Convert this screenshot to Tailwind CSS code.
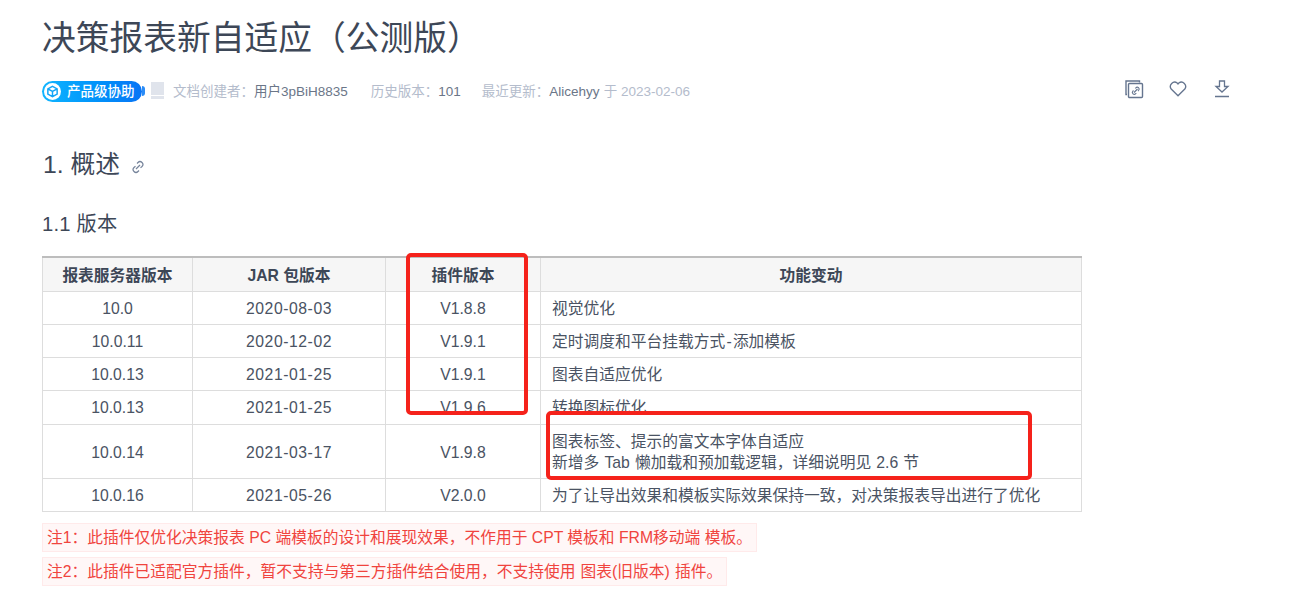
<!DOCTYPE html>
<html lang="zh"><head><meta charset="utf-8">
<script src="https://cdn.jsdelivr.net/npm/@tailwindcss/browser@4"></script>
</head>
<body class="bg-white overflow-hidden">
<div class="relative w-[1294px] h-[610px] overflow-hidden pl-[42px] font-['Liberation_Sans','Noto_Sans_CJK_SC',sans-serif] text-[#3d4757]">
  <h1 class="h-[72px] pt-[16px] text-[33.75px] leading-[44px] text-[#3d4757]">决策报表新自适应（公测版）</h1>
  <div class="flex items-center h-[38px] w-[1188px] text-[13.5px] text-[#b4bccc]">
    <span class="flex items-center w-[100px] h-[21px] rounded-full bg-gradient-to-r from-[#12b5ff] to-[#0a74f5] text-white text-[13.5px] font-medium">
      <span class="ml-[2px] flex items-center justify-center w-[17px] h-[17px] rounded-full bg-white">
        <svg width="13" height="13" viewBox="0 0 14 14" fill="none" stroke="#12a5f8" stroke-width="1.6"><path d="M7 1.5 12 4.2V9.8L7 12.5 2 9.8V4.2ZM2 4.2 7 7 12 4.2M7 7V12.5"/></svg>
      </span>
      <span class="ml-[6px] pt-[2px]">产品级协助</span>
    </span>
    <span class="w-[3px] h-[10px] rounded-r-full bg-[#2a8cf7]"></span>
    <svg class="ml-[6px]" width="13" height="18" viewBox="0 0 13 18"><rect x="0" y="0" width="13" height="13" fill="#e0e4ec"/><path d="M0 14H13V17H0Z" fill="#e0e4ec"/></svg>
    <span class="ml-[9px] pt-[2px]">文档创建者：</span><span class="text-[#6b7688] pt-[2px]">用户3pBiH8835</span>
    <span class="ml-[23px] pt-[2px]">历史版本：</span><span class="text-[#6b7688] pt-[2px]">101</span>
    <span class="ml-[21px] pt-[2px]">最近更新：</span><span class="text-[#6b7688] pt-[2px]">Alicehyy</span><span class="ml-[4px] pt-[2px]">于 2023-02-06</span>
    <span class="ml-auto mb-[5px] flex items-center gap-[25px] text-[#65758f]">
      <svg width="20" height="20" viewBox="0 0 20 20" fill="none" stroke="currentColor" stroke-width="1.4"><path d="M3 15.500H2V2H15.500V3.500"/><rect x="4.500" y="4.500" width="14" height="14" rx="1"/><path d="M10 13.500l3.500-3.500M9.500 11.500l-.6.6a1.600 1.600 0 0 0 2.800 2.600l.6-.6M14 12l.6-.6a1.600 1.600 0 0 0-2.800-2.600l-.6.6" stroke-width="1.100"/></svg>
      <svg width="18" height="16" viewBox="0 0 18 16" fill="none" stroke="currentColor" stroke-width="1.300"><path d="M9 14.800 2.200 8A4.300 4.300 0 0 1 8.200 2l.8.900.8-.900a4.300 4.300 0 0 1 6 6Z"/></svg>
      <svg class="ml-[2px]" width="16" height="18" viewBox="0 0 16 18" fill="none" stroke="currentColor" stroke-width="1.300"><path d="M5.500 1h5v5.500h3.500L8 12 2 6.500h3.500ZM1 16.500h14"/></svg>
    </span>
  </div>
  <h2 class="mt-[33px] flex items-center h-[42px] text-[24.75px] leading-[42px] pl-[1px]"><span class="pt-[2px]">1. 概述</span>
    <svg class="ml-[11px] mt-[6px]" width="14" height="14" viewBox="0 0 14 14" fill="none" stroke="#76849b" stroke-width="1.200"><path d="M5 9l4-4M6 3.500l1-1a2.700 2.700 0 0 1 4 4l-1.500 1.200M8 10.500l-1 1a2.700 2.700 0 0 1-4-4l1.500-1.200"/></svg>
  </h2>
  <h3 class="mt-[24px] h-[30px] text-[20.25px] leading-[30px] tracking-[.2px]">1.1 版本</h3>
  <table class="mt-[17px] w-[1040px] table-fixed border-collapse text-[15.75px] text-[#4a5363] text-center border-t-2 border-t-[#bdbdbd]">
    <colgroup><col class="w-[150px]"><col class="w-[193px]"><col class="w-[155px]"><col></colgroup>
    <tbody>
      <tr class="h-[34px] bg-[#f6f6f6] font-bold text-[#3d4757]"><td class="border border-[#ddd] pt-[3px]">报表服务器版本</td><td class="border border-[#ddd] pt-[3px]">JAR 包版本</td><td class="border border-[#ddd] pt-[3px]">插件版本</td><td class="border border-[#ddd] pt-[3px]">功能变动</td></tr>
      <tr class="h-[33px]"><td class="border border-[#ddd] pt-[2px]">10.0</td><td class="border border-[#ddd] pt-[2px] tracking-[.55px]">2020-08-03</td><td class="border border-[#ddd] pt-[2px]">V1.8.8</td><td class="border border-[#ddd] pt-[2px] text-left pl-[11px]">视觉优化</td></tr>
      <tr class="h-[33px]"><td class="border border-[#ddd] pt-[2px]">10.0.11</td><td class="border border-[#ddd] pt-[2px] tracking-[.55px]">2020-12-02</td><td class="border border-[#ddd] pt-[2px]">V1.9.1</td><td class="border border-[#ddd] pt-[2px] text-left pl-[11px]">定时调度和平台挂载方式<span class="px-[1.2px]">-</span>添加模板</td></tr>
      <tr class="h-[33px]"><td class="border border-[#ddd] pt-[2px]">10.0.13</td><td class="border border-[#ddd] pt-[2px] tracking-[.55px]">2021-01-25</td><td class="border border-[#ddd] pt-[2px]">V1.9.1</td><td class="border border-[#ddd] pt-[2px] text-left pl-[11px]">图表自适应优化</td></tr>
      <tr class="h-[34px]"><td class="border border-[#ddd] pt-[2px]">10.0.13</td><td class="border border-[#ddd] pt-[2px] tracking-[.55px]">2021-01-25</td><td class="border border-[#ddd] pt-[2px]">V1.9.6</td><td class="border border-[#ddd] pt-[2px] text-left pl-[11px]">转换图标优化</td></tr>
      <tr class="h-[54px] leading-[21px]"><td class="border border-[#ddd] pt-[2px]">10.0.14</td><td class="border border-[#ddd] pt-[2px] tracking-[.55px]">2021-03-17</td><td class="border border-[#ddd] pt-[2px]">V1.9.8</td><td class="border border-[#ddd] text-left pl-[11px] pt-[2px] [word-spacing:.75px]">图表标签、提示的富文本字体自适应<br>新增多 Tab 懒加载和预加载逻辑，详细说明见 2.6 节</td></tr>
      <tr class="h-[33px]"><td class="border border-[#ddd] pt-[2px]">10.0.16</td><td class="border border-[#ddd] pt-[2px] tracking-[.55px]">2021-05-26</td><td class="border border-[#ddd] pt-[2px]">V2.0.0</td><td class="border border-[#ddd] pt-[2px] text-left pl-[11px]">为了让导出效果和模板实际效果保持一致，对决策报表导出进行了优化</td></tr>
    </tbody>
  </table>
  <p class="mt-[11px] w-fit h-[29px] leading-[28px] px-[4px] text-[15.75px] text-[#f0443e] bg-[#fff7f7] border border-[#ffeaea]">注1：此插件仅优化决策报表 PC 端模板的设计和展现效果，不作用于 CPT 模板和 FRM移动端 模板。</p>
  <p class="mt-[5px] w-fit h-[29px] leading-[28px] px-[4px] text-[15.75px] text-[#f0443e] bg-[#fff7f7] border border-[#ffeaea] [word-spacing:.7px]">注2：此插件已适配官方插件，暂不支持与第三方插件结合使用，不支持使用 图表(旧版本) 插件。</p>
  <div class="absolute left-[406px] top-[253px] w-[122px] h-[162px] border-[4px] border-[#f5221b] rounded-[5px]"></div>
  <div class="absolute left-[546px] top-[411px] w-[486px] h-[69px] border-[4px] border-[#f5221b] rounded-[5px]"></div>
</div>
</body></html>
